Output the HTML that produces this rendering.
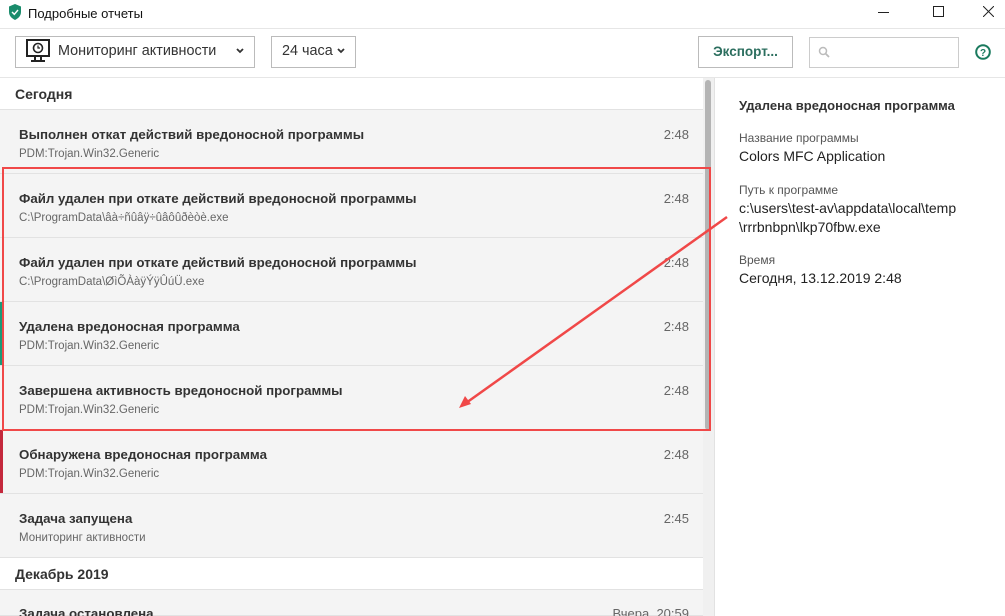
<!DOCTYPE html>
<html style="overflow:hidden;width:1005px;height:616px"><head><meta charset="utf-8"><style>
*{margin:0;padding:0;box-sizing:border-box}
body{width:1005px;height:616px;overflow:hidden;background:#fff;font-family:"Liberation Sans","DejaVu Sans",sans-serif;color:#222;position:relative}
.abs{position:absolute}
.title{left:28px;top:6px;font-size:13px;color:#111}
.row{position:absolute;left:0;width:703px;height:64px;background:#f4f4f4;box-shadow:inset 0 -1px 0 #e2e2e2;overflow:hidden}
.row .t{position:absolute;left:19px;top:17px;font-size:13.3px;font-weight:bold;color:#333}
.row .s{position:absolute;left:19px;top:38px;font-size:11.5px;color:#666}
.row .tm{position:absolute;right:14px;top:17px;font-size:13px;color:#666}
.sec{position:absolute;left:0;width:703px;background:#fff;font-size:14px;font-weight:bold;color:#333;padding-left:15px;box-shadow:inset 0 -1px 0 #e2e2e2}
.lbl{font-size:12px;color:#555;position:absolute;left:739px}
.val{font-size:14px;color:#222;position:absolute;left:739px;line-height:19px}
</style></head><body>
<svg class="abs" style="left:8px;top:4px" width="14" height="16" viewBox="0 0 14 16"><path d="M7 0 L13 2.5 V8 C13 12 10 14.5 7 16 C4 14.5 1 12 1 8 V2.5 Z" fill="#1a8c6c"/><path d="M4 8 L6.3 10.3 L10 6" stroke="#fff" stroke-width="1.4" fill="none"/></svg>
<div class="abs title">Подробные отчеты</div>
<div class="abs" style="left:878px;top:12px;width:11px;height:1px;background:#222"></div>
<div class="abs" style="left:933px;top:6px;width:11px;height:11px;border:1px solid #222"></div>
<svg class="abs" style="left:983px;top:6px" width="11" height="11"><path d="M0 0L11 11M11 0L0 11" stroke="#222" stroke-width="1"/></svg>
<div class="abs" style="left:0;top:28px;width:1005px;height:1px;background:#e6e6e6"></div>
<div class="abs" style="left:15px;top:36px;width:240px;height:32px;border:1px solid #bbb"></div>
<svg class="abs" style="left:26px;top:39px" width="24" height="24" viewBox="0 0 24 24"><rect x="1" y="1" width="22" height="16" fill="none" stroke="#222" stroke-width="2"/><circle cx="12" cy="9" r="4.5" fill="none" stroke="#222" stroke-width="1.6"/><path d="M12 6.5V9H14" stroke="#222" stroke-width="1.2" fill="none"/><path d="M9 18V21M15 18V21M5 22H19" stroke="#222" stroke-width="2"/></svg>
<div class="abs" style="left:58px;top:43px;font-size:14.4px;color:#333">Мониторинг активности</div>
<svg class="abs" style="left:236px;top:48px" width="8" height="6"><path d="M1 1L4 4L7 1" stroke="#333" stroke-width="1.8" fill="none"/></svg>
<div class="abs" style="left:271px;top:36px;width:85px;height:32px;border:1px solid #bbb"></div>
<div class="abs" style="left:282px;top:43px;font-size:14.4px;color:#333">24 часа</div>
<svg class="abs" style="left:337px;top:48px" width="8" height="6"><path d="M1 1L4 4L7 1" stroke="#333" stroke-width="1.8" fill="none"/></svg>
<div class="abs" style="left:698px;top:36px;width:95px;height:32px;border:1px solid #bbb;font-size:13.5px;font-weight:bold;color:#2b6e5e;text-align:center;line-height:30px">Экспорт...</div>
<div class="abs" style="left:809px;top:37px;width:150px;height:31px;border:1px solid #ccc"></div>
<svg class="abs" style="left:818px;top:46px" width="12" height="12"><circle cx="5" cy="5" r="3.5" fill="none" stroke="#bbb" stroke-width="1.5"/><path d="M7.5 7.5L11 11" stroke="#bbb" stroke-width="1.8"/></svg>
<svg class="abs" style="left:975px;top:44px" width="16" height="16"><circle cx="8" cy="8" r="6.8" fill="none" stroke="#1a7a5e" stroke-width="2"/><text x="8" y="12" font-size="10" font-weight="bold" fill="#1a7a5e" text-anchor="middle" font-family="Liberation Sans">?</text></svg>
<div class="abs" style="left:0;top:77px;width:1005px;height:1px;background:#e6e6e6"></div>
<div class="sec" style="top:78px;height:32px;line-height:32px">Сегодня</div>
<div class="row" style="top:110px"><div class="t">Выполнен откат действий вредоносной программы</div><div class="s">PDM:Trojan.Win32.Generic</div><div class="tm">2:48</div></div>
<div class="row" style="top:174px"><div class="t">Файл удален при откате действий вредоносной программы</div><div class="s">C:\ProgramData\âà÷ñûâÿ÷ûâôûðèòè.exe</div><div class="tm">2:48</div></div>
<div class="row" style="top:238px"><div class="t">Файл удален при откате действий вредоносной программы</div><div class="s">C:\ProgramData\ØìÕÀàÿÝÿÛúÜ.exe</div><div class="tm">2:48</div></div>
<div class="row" style="top:302px"><div class="t">Удалена вредоносная программа</div><div class="s">PDM:Trojan.Win32.Generic</div><div class="tm">2:48</div></div>
<div class="row" style="top:366px"><div class="t">Завершена активность вредоносной программы</div><div class="s">PDM:Trojan.Win32.Generic</div><div class="tm">2:48</div></div>
<div class="row" style="top:430px"><div class="t">Обнаружена вредоносная программа</div><div class="s">PDM:Trojan.Win32.Generic</div><div class="tm">2:48</div></div>
<div class="abs" style="left:0;top:302px;width:2px;height:63px;background:#1a9a78"></div>
<div class="abs" style="left:0;top:430px;width:3px;height:63px;background:#c4283c"></div>
<div class="row" style="top:494px"><div class="t">Задача запущена</div><div class="s">Мониторинг активности</div><div class="tm">2:45</div></div>
<div class="sec" style="top:558px;height:32px;line-height:32px">Декабрь 2019</div>
<div class="row" style="top:590px;height:26px"><div class="t" style="top:16px">Задача остановлена</div><div class="tm" style="top:16px">Вчера, 20:59</div></div>
<div class="abs" style="left:703px;top:78px;width:11px;height:538px;background:#f0f0f0"></div>
<div class="abs" style="left:705px;top:80px;width:6px;height:350px;background:#b4b4b4;border-radius:3px"></div>
<div class="abs" style="left:714px;top:78px;width:1px;height:538px;background:#e2e2e2"></div>
<div class="val" style="top:96px;font-weight:bold;color:#333;font-size:13px">Удалена вредоносная программа</div>
<div class="lbl" style="top:131px">Название программы</div>
<div class="val" style="top:147px">Colors MFC Application</div>
<div class="lbl" style="top:183px">Путь к программе</div>
<div class="val" style="top:199px">c:\users\test-av\appdata\local\temp<br>\rrrbnbpn\lkp70fbw.exe</div>
<div class="lbl" style="top:253px">Время</div>
<div class="val" style="top:269px">Сегодня, 13.12.2019 2:48</div>
<div class="abs" style="left:2px;top:167px;width:709px;height:264px;border:2px solid #f04848"></div>
<svg class="abs" style="left:0;top:0" width="1005" height="616"><line x1="727" y1="217" x2="466" y2="403" stroke="#f04848" stroke-width="2.5"/><path d="M459 408 L465 396 L471 404 Z" fill="#f04848"/></svg>
</body></html>
